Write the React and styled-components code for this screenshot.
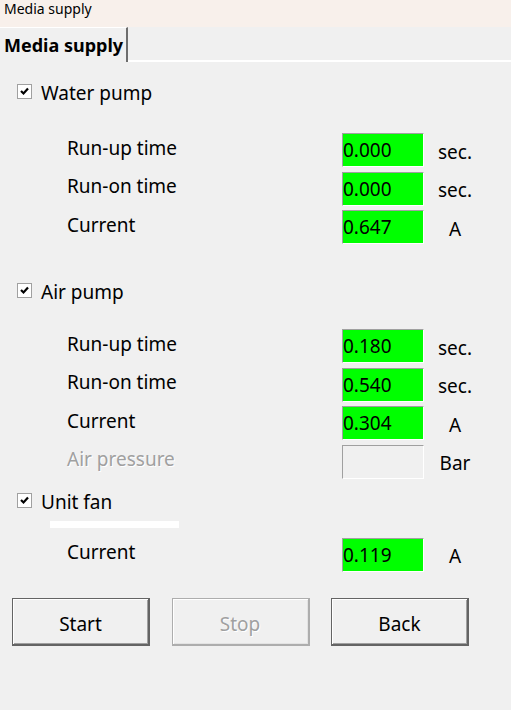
import React from "react";
import styled, { createGlobalStyle } from "styled-components";

const GlobalStyle = createGlobalStyle`
  html, body {
    margin: 0;
    padding: 0;
    background: #f0f0f0;
  }
  body {
    font-family: "Noto Sans", "Open Sans", sans-serif;
    color: #000;
  }
`;

const Window = styled.div`
  width: 511px;
  height: 710px;
  background: #f0f0f0;
  overflow: hidden;
`;

const TitleBar = styled.div`
  height: 27px;
  background: #f8f0eb;
  font-size: 14px;
  line-height: 17px;
  padding: 0 4px;
  box-sizing: border-box;
`;

const TabStrip = styled.div`
  display: flex;
  height: 35px;
`;

const Tab = styled.div`
  width: 128px;
  box-sizing: border-box;
  border-top: 1px solid #ffffff;
  border-right: 2px solid #6d6d6d;
  padding: 0 4px;
  font-size: 18px;
  font-weight: 700;
  line-height: 34px;
  white-space: nowrap;
`;

const TabFiller = styled.div`
  flex: 1;
  border-bottom: 2px solid #ffffff;
`;

const CheckRow = styled.label`
  display: flex;
  align-items: center;
  gap: 9px;
  height: 22px;
  padding-left: 17px;
  margin-top: ${(p) => p.$top}px;
  font-size: 19px;
`;

const CheckText = styled.span`
  padding-top: 3px;
`;

const Box = styled.span`
  width: 15px;
  height: 15px;
  box-sizing: border-box;
  border: 1px solid #a0a0a0;
  background: #ffffff;
  display: flex;
  align-items: center;
  justify-content: center;
  flex: none;
`;

const Fields = styled.div`
  display: grid;
  grid-template-columns: 275px 82px 62px;
  grid-auto-rows: 34px;
  row-gap: 4.6px;
  padding-left: 67px;
  margin-top: ${(p) => p.$top}px;
  font-size: 19px;
`;

const Label = styled.div`
  display: flex;
  align-items: center;
  padding-bottom: 5px;
  color: ${(p) => (p.$disabled ? "#a0a0a0" : "#000")};
  text-shadow: ${(p) => (p.$disabled ? "1px 1px 0 #ffffff" : "none")};
`;

const Value = styled.div`
  box-sizing: border-box;
  border-top: 1px solid #a0a0a0;
  border-left: 1px solid #a0a0a0;
  border-right: 1px solid #ffffff;
  border-bottom: 1px solid #ffffff;
  background: ${(p) => (p.$empty ? "#f0f0f0" : "#00ff00")};
  display: flex;
  align-items: center;
  padding-left: 0;
`;

const Unit = styled.div`
  display: flex;
  align-items: center;
  justify-content: center;
  padding-top: 3px;
`;

const Divider = styled.div`
  width: 129px;
  height: 7px;
  background: #ffffff;
  margin: 9px 0 0 50px;
`;

const ButtonBar = styled.div`
  display: flex;
  gap: 21.5px;
  padding-left: 12px;
  margin-top: 26px;
`;

const Button = styled.button`
  width: 138px;
  height: 48px;
  box-sizing: border-box;
  background: #f0f0f0;
  border-style: solid;
  border-width: 1px 2px 2px 1px;
  border-color: ${(p) => (p.disabled ? "#adadad" : "#646464")};
  box-shadow: inset 1px 1px 0 #ffffff, inset -1px -1px 0 ${(p) => (p.disabled ? "#e3e3e3" : "#a0a0a0")};
  font-family: "Noto Sans", "Open Sans", sans-serif;
  font-size: 19px;
  color: ${(p) => (p.disabled ? "#a0a0a0" : "#000")};
  text-shadow: ${(p) => (p.disabled ? "1px 1px 0 #ffffff" : "none")};
  padding: 6px 0 0;
`;

const Check = () => (
  <Box>
    <svg width="11" height="11" viewBox="0 0 11 11">
      <polyline points="2,5 4.5,7.5 9,2.5" fill="none" stroke="#000" strokeWidth="2.2" />
    </svg>
  </Box>
);

const Field = ({ label, value, unit, disabled }) => (
  <>
    <Label $disabled={disabled}>{label}</Label>
    <Value $empty={value == null}>{value}</Value>
    <Unit>{unit}</Unit>
  </>
);

export default function App() {
  return (
    <Window>
      <GlobalStyle />
      <TitleBar>Media supply</TitleBar>
      <TabStrip>
        <Tab>Media supply</Tab>
        <TabFiller />
      </TabStrip>

      <CheckRow $top={18}>
        <Check />
        <CheckText>Water pump</CheckText>
      </CheckRow>
      <Fields $top={31}>
        <Field label="Run-up time" value="0.000" unit="sec." />
        <Field label="Run-on time" value="0.000" unit="sec." />
        <Field label="Current" value="0.647" unit="A" />
      </Fields>

      <CheckRow $top={35}>
        <Check />
        <CheckText>Air pump</CheckText>
      </CheckRow>
      <Fields $top={28}>
        <Field label="Run-up time" value="0.180" unit="sec." />
        <Field label="Run-on time" value="0.540" unit="sec." />
        <Field label="Current" value="0.304" unit="A" />
        <Field label="Air pressure" value={null} unit="Bar" disabled />
      </Fields>

      <CheckRow $top={11}>
        <Check />
        <CheckText>Unit fan</CheckText>
      </CheckRow>
      <Divider />
      <Fields $top={10}>
        <Field label="Current" value="0.119" unit="A" />
      </Fields>

      <ButtonBar>
        <Button>Start</Button>
        <Button disabled>Stop</Button>
        <Button>Back</Button>
      </ButtonBar>
    </Window>
  );
}
